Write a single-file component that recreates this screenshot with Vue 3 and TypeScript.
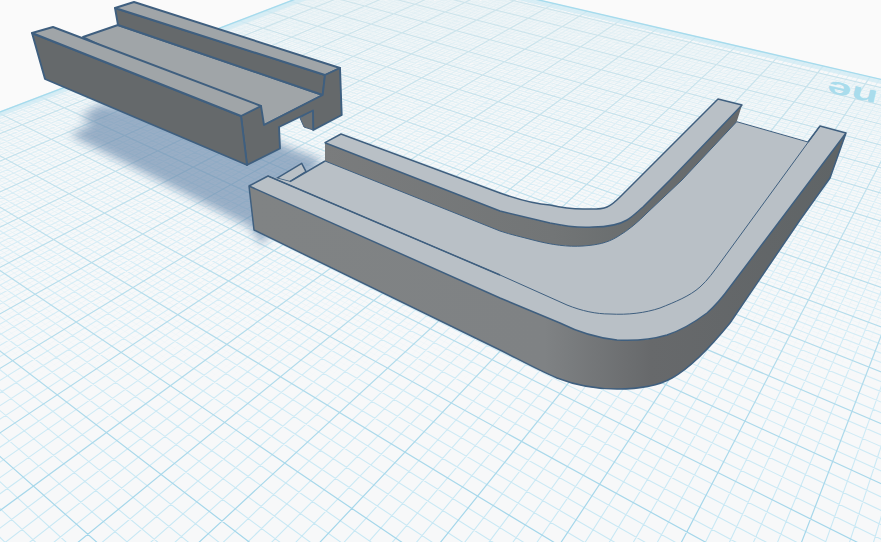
<script setup lang="ts">
import { computed } from 'vue'

type Pt = [number, number]

// workplane perspective, measured off the picture
const origin: Pt = [386, -35.5]
const vanishS: Pt = [-891, -332]
const vanishT: Pt = [1134, -321]
const stepS = -0.0198
const stepT = -0.0253
const offsetS = -0.12
const offsetT = 0.5
const subdivisions = 10
const majorCount = 34

const lerpFrom = (p: number, v: Pt): Pt => [
  (origin[0] + p * v[0]) / (1 + p),
  (origin[1] + p * v[1]) / (1 + p)
]

const lineAway = (start: Pt, v: Pt) => {
  const dx = start[0] - v[0]
  const dy = start[1] - v[1]
  const len = Math.hypot(dx, dy)
  const x2 = start[0] + (dx / len) * 1800
  const y2 = start[1] + (dy / len) * 1800
  return `M${start[0].toFixed(1)} ${start[1].toFixed(1)}L${x2.toFixed(1)} ${y2.toFixed(1)}`
}

// keep picks which subdivisions a level draws
const buildGrid = (keep: (i: number) => boolean) => {
  let d = ''
  const total = majorCount * subdivisions
  for (let i = 0; i < total; i++) {
    if (!keep(i)) continue
    const k = i / subdivisions
    const p = stepS * (k + offsetS)
    const q = stepT * (k + offsetT)
    if (p < 0 && p > -0.9) d += lineAway(lerpFrom(p, vanishS), vanishT)
    if (q < 0 && q > -0.9) d += lineAway(lerpFrom(q, vanishT), vanishS)
  }
  return d
}

const fineGrid = computed(() => buildGrid((i) => i % 2 === 1))
const minorGrid = computed(() => buildGrid((i) => i % 2 === 0 && i % subdivisions !== 0))
const majorGrid = computed(() => buildGrid((i) => i % subdivisions === 0))
</script>

<template>
  <div class="viewport">
    <svg class="scene" width="881" height="542" viewBox="0 0 881 542">
      <defs>
        <filter id="soft" x="-20%" y="-20%" width="140%" height="140%">
          <feGaussianBlur stdDeviation="5" />
        </filter>
        <linearGradient id="fineStroke" gradientUnits="userSpaceOnUse" x1="0" y1="0" x2="0" y2="542">
          <stop offset="0" stop-color="#e8f2f5" />
          <stop offset="0.5" stop-color="#e4f2f7" />
          <stop offset="0.72" stop-color="#e4f2f7" stop-opacity="0" />
        </linearGradient>
        <linearGradient id="minorStroke" gradientUnits="userSpaceOnUse" x1="0" y1="0" x2="0" y2="542">
          <stop offset="0" stop-color="#e4f0f4" />
          <stop offset="0.5" stop-color="#d6edf6" />
          <stop offset="1" stop-color="#c8e8f4" />
        </linearGradient>
        <linearGradient id="majorStroke" gradientUnits="userSpaceOnUse" x1="0" y1="0" x2="0" y2="542">
          <stop offset="0" stop-color="#cfe5ec" />
          <stop offset="0.5" stop-color="#b8deec" />
          <stop offset="1" stop-color="#a3d6ea" />
        </linearGradient>
        <linearGradient id="outerSide" gradientUnits="userSpaceOnUse" x1="250" y1="0" x2="840" y2="0">
          <stop offset="0" stop-color="#808384" />
          <stop offset="0.5" stop-color="#7f8284" />
          <stop offset="0.68" stop-color="#67696b" />
          <stop offset="1" stop-color="#5f6466" />
        </linearGradient>
        <linearGradient id="innerSide" gradientUnits="userSpaceOnUse" x1="325" y1="0" x2="740" y2="0">
          <stop offset="0" stop-color="#7a7c7d" />
          <stop offset="0.55" stop-color="#727576" />
          <stop offset="0.75" stop-color="#696d6e" />
          <stop offset="1" stop-color="#66696b" />
        </linearGradient>
      </defs>

      <!-- workplane -->
      <polygon class="plane" points="386,-35.5 1000,107 1000,700 -50,700 -50,131" />
      <path class="grid-fine" :d="fineGrid" />
      <path class="grid-minor" :d="minorGrid" />
      <path class="grid-major" :d="majorGrid" />
      <polyline class="plane-glow" points="-50,133 386,-33 1000,109" />
      <polyline class="plane-edge" points="-50,131 386,-35.5 1000,107" />
      <text class="plane-label" transform="translate(829 80) rotate(193) scale(2 1.05)" text-anchor="end">ne</text>

      <!-- shadow of the floating part -->
      <polygon
        class="shadow"
        filter="url(#soft)"
        points="100,104 80,117 93,123 70,135 250,227 262,245 300,190 322,160 285,146 240,120"
      />

      <!-- curved part -->
      <polygon class="top-light line" points="276.7,178.3 301.7,163.3 306,171.7 290,181.7" />
      <path
        class="top-light"
        d="M249,186 L268,176 L290,181.7 L325,161 L500,231 C512,235 522,237 533,240 C552,245 568,247 583,246 C597,245 607,243 617,237 C629,230 638,222 647,213 L682,180 L736.7,121.7 L808,142 L820,126 L846,133 L730,287 C722,298 715,306 707,313 C695,322 682,330 667,335 C650,340 635,341 617,340 C598,338 578,332 560,323 L500,298 Z"
      />
      <path
        class="fill-outer line"
        d="M249,186 L254,230 L500,350 C520,360 538,370 557,378 C580,387 600,389 617,389 C640,389 658,386 672,378 C690,368 708,350 730,323 L800,220 L830,178 L846,133 L730,287 C722,298 715,306 707,313 C695,322 682,330 667,335 C650,340 635,341 617,340 C598,338 578,332 560,323 L500,298 Z"
      />
      <path
        class="fill-inner"
        d="M325,142.7 L325,161 L500,231 C512,235 522,237 533,240 C552,245 568,247 583,246 C597,245 607,243 617,237 C629,230 638,222 647,213 L682,180 L736.7,121.7 L742,105 L670,180 L643,207 C636,213 632,217 627,220 C617,226 605,227 593,227 C578,228 564,226 550,223 L500,211 Z"
      />
      <path
        class="top-light line"
        d="M325,142.7 L341,134 L500,193 C520,200 535,204 550,205 C563,208 573,209 583,209 C592,209 600,210 607,207 C612,205 616,201 620,197 L637,180 L718,99 L742,105 L670,180 L643,207 C636,213 632,217 627,220 C617,226 605,227 593,227 C578,228 564,226 550,223 L500,211 Z"
      />
      <path
        class="line-thin"
        d="M325,161 L500,231 C512,235 522,237 533,240 C552,245 568,247 583,246 C597,245 607,243 617,237 C629,230 638,222 647,213 L682,180 L736.7,121.7 L808,142"
      />
      <path
        class="line-thin"
        d="M268,176 L500,275 L567,305 C582,311 596,314 610,314 C628,315 645,313 660,308 C675,302 690,296 700,287 C708,280 714,271 720,263 L820,126"
      />
      <line class="line" x1="325" y1="161" x2="290" y2="181.7" />
      <path class="line open" d="M249,186 L268,176 L500,275" />
      <path class="line open" d="M808,142 L820,126 L846,133" />

      <!-- floating part -->
      <polygon class="under" points="300,118 304,127 313.3,130 313,110" />
      <polygon class="top-dark line-bold" points="83,37 118,25 322.7,95 264,125" />
      <polygon class="side-dark line-bold" points="115,8 325,75 322.7,95 118,25" />
      <polygon class="top-dark line-bold" points="115,8 134,2 340,68 325,75" />
      <polygon
        class="side-dark line-bold"
        points="241,116 261,106 264,125 322.7,95 325,75 340,68 341.7,115 313.3,130 313,110.5 279,127 280,148.5 247,165"
      />
      <polygon class="side-dark line-bold" points="32,33 241,116 247,165 45,79" />
      <polygon class="top-dark line-bold" points="32,33 53,27 261,106 241,116" />
    </svg>
  </div>
</template>

<style scoped>
.viewport { width: 881px; height: 542px; overflow: hidden; background: #fafafa; }
.scene { display: block; }
.plane { fill: #f7f8f9; }
.grid-fine { fill: none; stroke: url(#fineStroke); stroke-width: 0.8; }
.grid-minor { fill: none; stroke: url(#minorStroke); stroke-width: 1.1; }
.grid-major { fill: none; stroke: url(#majorStroke); stroke-width: 1.2; }
.plane-edge { fill: none; stroke: #a6dbed; stroke-width: 1.4; }
.plane-glow { fill: none; stroke: #cde9f3; stroke-width: 5; opacity: 0.7; }
.plane-label { font-family: "Liberation Sans", Arial, sans-serif; font-size: 22px; font-weight: 700; fill: #a9dcec; }
.shadow { fill: #6b89ac; opacity: 0.66; }
.top-light { fill: #b9c0c6; }
.top-dark { fill: #a0a5a8; }
.side-dark { fill: #65696b; }
.under { fill: #6e7274; stroke: #4a6480; stroke-width: 1; }
.fill-outer { fill: url(#outerSide); }
.fill-inner { fill: url(#innerSide); }
.line { stroke: #3f5f7f; stroke-width: 1.5; stroke-linejoin: round; }
.line-bold { stroke: #3f5f7f; stroke-width: 1.9; stroke-linejoin: round; }
.line-thin { fill: none; stroke: #3f5f7f; stroke-width: 1; stroke-linejoin: round; }
.open { fill: none; }
</style>
